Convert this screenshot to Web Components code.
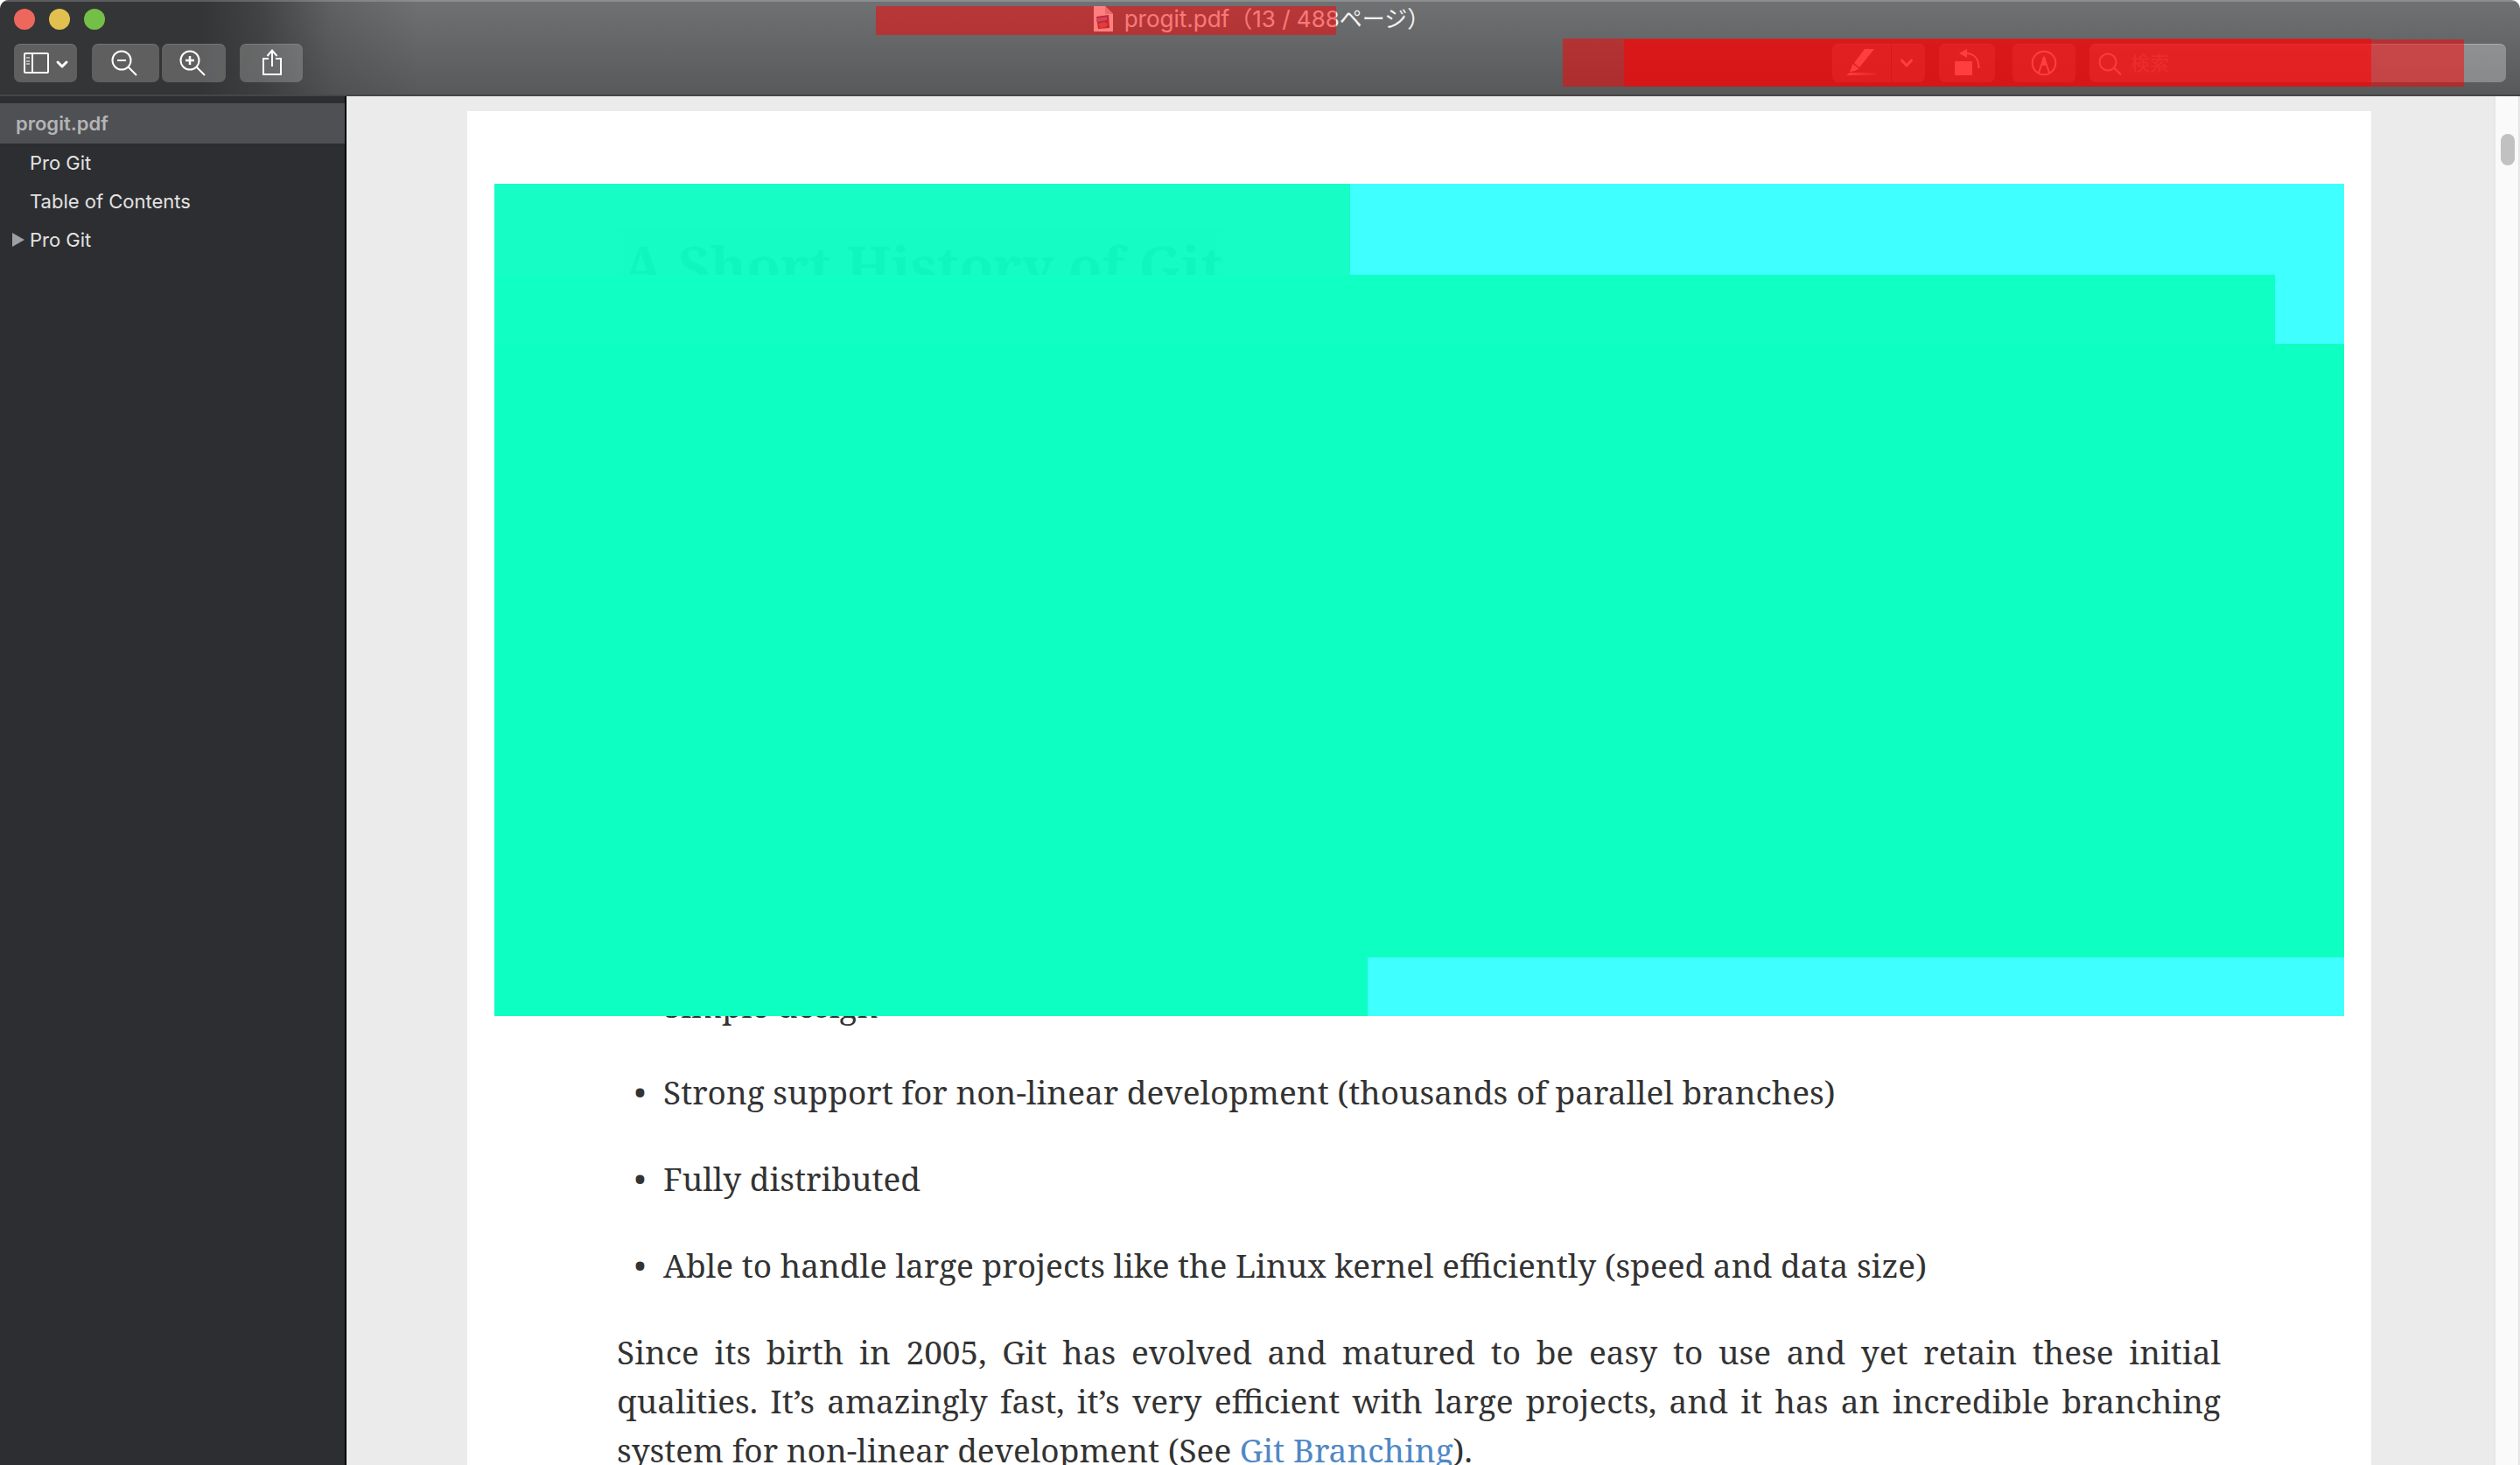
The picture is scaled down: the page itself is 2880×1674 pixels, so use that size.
<!DOCTYPE html>
<html lang="ja">
<head>
<meta charset="utf-8">
<title>progit.pdf</title>
<style>
  html, body { margin: 0; height: 100%; background: #fff; }
  body { font-family: Inter, "Noto Sans CJK JP", sans-serif; font-size: 22px; overflow: hidden; }
</style>
</head>
<body>
<pdf-window>
  <title-bar slot="header"></title-bar>
  <outline-list slot="sidebar">
    <outline-item current>progit.pdf</outline-item>
    <outline-item>Pro Git</outline-item>
    <outline-item>Table of Contents</outline-item>
    <outline-item expandable>Pro Git</outline-item>
  </outline-list>
  <pdf-page>
    <span slot="heading">A Short History of Git</span>
    <bullet-item slot="list">Simple design</bullet-item>
    <bullet-item slot="list">Strong support for non-linear development (thousands of parallel branches)</bullet-item>
    <bullet-item slot="list">Fully distributed</bullet-item>
    <bullet-item slot="list">Able to handle large projects like the Linux kernel efficiently (speed and data size)</bullet-item>
  </pdf-page>
</pdf-window>

<script>
const define = (name, html) => {
  const template = document.createElement('template');
  template.innerHTML = html;
  customElements.define(name, class extends HTMLElement {
    constructor() {
      super();
      this.attachShadow({ mode: 'open' }).append(template.content.cloneNode(true));
      const label = this.getAttribute('label');
      const button = this.shadowRoot.querySelector('button');
      if (label && button) button.setAttribute('aria-label', label);
    }
  });
};

define('pdf-window', `
<style>
  :host { display: flex; flex-direction: column; height: 100vh; overflow: hidden; border-radius: 10px 10px 0 0; }
  .body { flex: 1; min-height: 0; display: flex; }
  .sidebar { flex: none; width: 394px; background: #2d2e31; border-right: 2px solid #000; }
  .canvas { flex: 1; min-width: 0; overflow: hidden; background: #ebebeb; padding: 17px 140px 0 138px; }
  .scroll { flex: none; width: 22px; padding: 43px 1px 0 3px; background: #fafafa; border: solid #e6e6e6; border-width: 0 2px; display: flex; flex-direction: column; align-items: center; }
  .thumb { width: 16px; height: 36px; border-radius: 8px; background: #c1c1c1; }
</style>
<slot name="header"></slot>
<div class="body">
  <nav class="sidebar"><slot name="sidebar"></slot></nav>
  <main class="canvas"><slot></slot></main>
  <div class="scroll"><div class="thumb"></div></div>
</div>`);

/* translucent marker laid over the toolbar */
define('red-mark', `
<style>:host { display: block; position: absolute; background: rgba(255, 0, 0, .5); pointer-events: none; }</style>`);

define('tool-button', `
<style>
  :host { display: flex; height: 44px; }
  button { all: unset; display: flex; width: 100%; height: 44px; border-radius: 7px; background: rgba(255,255,255,.21); box-shadow: inset 0 1px rgba(255,255,255,.12); color: #fff; }
</style>
<button type="button"><slot></slot></button>`);

define('title-bar', `
<style>
  :host { display: block; position: relative; color: #f2f2f2;
    background: linear-gradient(to right, #343536 0, #343536 230px, rgba(52,53,54,.75) 300px, rgba(52,53,54,.25) 380px, transparent 480px), linear-gradient(#707173, #58595a);
    border-bottom: 2px solid #474645; box-shadow: inset 0 2px rgba(255,255,255,.2); }
  .title { display: grid; grid-template-columns: 1fr auto 1fr; align-items: center; height: 44px; padding: 0 16px; }
  .lights { display: flex; gap: 16px; }
  .lights i { width: 24px; height: 24px; border-radius: 50%; }
  h1 { margin: 0; padding-left: 4px; display: flex; align-items: center; gap: 12px; font-size: 26px; font-weight: 400; line-height: 44px; }
  .tools { display: flex; padding: 6px 16px 14px; }
  .tools > * { flex: none; }
  svg { display: block; fill: none; stroke: currentColor; stroke-width: 2; }
  .gap { margin-left: 16px; }
  .zoom { margin-left: 17px; }
  .wide { margin-left: 20px; }
  .join { margin-left: 3px; }
  .push { margin-left: auto; }
  .search { display: flex; align-items: center; width: 476px; height: 44px; border-radius: 7px; background: rgba(255,255,255,.28); box-shadow: inset 0 1px rgba(255,255,255,.25); }
  input { all: unset; flex: 1; min-width: 0; font-size: 22px; line-height: 44px; color: #fff; }
  input::placeholder { color: #b2b3b4; opacity: 1; }
  .m1 { left: 1001px; top: 7px; width: 526px; height: 33px; }
  .m2 { left: 1786px; top: 44px; width: 924px; height: 55px; }
  .m3 { left: 1856px; top: 45px; width: 960px; height: 54px; }
</style>
<div class="title">
  <div class="lights"><i style="background:#ee675c"></i><i style="background:#e1c04f"></i><i style="background:#74bf47"></i></div>
  <h1>
    <svg width="23" height="30" viewBox="0 0 23 30" stroke="none"><path d="M0 0H13L22 9V29H0Z" fill="#fff" stroke="none"/><path d="M13 0L22 9H13Z" fill="#d4d4d4" stroke="none"/><path d="M3 12L17 10L18 25L5 26Z" fill="#8a5160" stroke="none"/><path d="M3 14L15 12V16L3 18Z" fill="#9e90c4" stroke="none"/><path d="M5 20L12 18L16 20L14 24L7 25Z" fill="#c97870" stroke="none"/></svg>
    <span>progit.pdf（13 / 488ページ）</span>
  </h1>
</div>
<div class="tools">
  <tool-button label="サイドバー" style="width:72px"><svg width="72" height="44"><rect x="12" y="11" width="27" height="22" rx="1"/><path d="M21 11V33"/><path d="M14 16H18M14 20H18M14 23H18" stroke-width="1.5" opacity=".7"/><path d="M50 21L55 26L60 21" stroke-width="3" stroke-linecap="round" stroke-linejoin="round"/></svg></tool-button>
  <tool-button label="縮小" class="zoom" style="width:77px"><svg width="77" height="44"><circle cx="34" cy="19" r="10.5"/><path d="M29 19H39M41.500 26.500L51 36"/></svg></tool-button>
  <tool-button label="拡大" class="join" style="width:73px"><svg width="73" height="44"><circle cx="32" cy="19" r="10.500"/><path d="M27 19H37M32 14V24" stroke-width="2.500"/><path d="M39.500 26.500L49 36"/></svg></tool-button>
  <tool-button label="共有" class="gap" style="width:72px"><svg width="72" height="44"><path d="M33 17H27V35H47V17H41M37 26V8M31.500 14L37 7.500L42.500 14"/></svg></tool-button>
  <tool-button label="ハイライト" class="push" style="width:106px"><svg width="106" height="44"><defs><linearGradient id="fade"><stop offset="0" stop-color="#fff"/><stop offset="1" stop-color="#fff" stop-opacity=".1"/></linearGradient></defs><g fill="currentColor" stroke="none"><path d="M37 6H48L31 27L25 22Z"/><path d="M23.500 23L30.500 28.500L26 31L20 32Z"/></g><path d="M20 33H52L48 36H16Z" fill="url(#fade)" stroke="none"/><path d="M67.500 0V44" stroke="#000" stroke-opacity=".25" stroke-width="1"/><path d="M79.500 19L85 25L90.500 19" stroke-width="3" stroke-linecap="round" stroke-linejoin="round"/></svg></tool-button>
  <tool-button label="回転" class="gap" style="width:64px"><svg width="64" height="44"><rect x="18" y="20" width="20" height="16" rx="1" fill="currentColor" stroke="none"/><path d="M23 11L32 6V16Z" fill="currentColor" stroke="none"/><path d="M31 11C40 11 45.500 17 45.500 28"/></svg></tool-button>
  <tool-button label="マークアップ" class="wide" style="width:72px"><svg width="72" height="44"><circle cx="36" cy="22" r="13.300"/><path d="M30 33L36 16L42 33"/><path d="M32.500 25L35 15H37L39.500 25Z" fill="currentColor" stroke="none"/></svg></tool-button>
  <label class="search gap"><svg width="47" height="44"><circle cx="21" cy="21" r="9.500"/><path d="M28 27.500L36 35.500"/></svg><input type="text" placeholder="検索" aria-label="検索"></label>
</div>
<red-mark class="m1"></red-mark>
<red-mark class="m2"></red-mark>
<red-mark class="m3"></red-mark>`);

define('outline-list', `
<style>:host { display: flex; flex-direction: column; padding-top: 8px; }</style>
<slot></slot>`);

define('outline-item', `
<style>
  :host { display: flex; align-items: center; height: 44px; color: #e2e2e2; }
  :host([current]) { height: 46px; background: #4f5054; color: #b4b4b5; font-weight: 600; }
  .mark { width: 34px; box-sizing: border-box; padding-left: 14px; color: #a0a0a2; }
  :host([current]) .mark { width: 18px; }
  svg { display: none; }
  :host([expandable]) svg { display: block; }
</style>
<span class="mark"><svg width="14" height="16"><path d="M0 0L14 8L0 16Z" fill="currentColor"/></svg></span><slot></slot>`);

define('bullet-item', `
<style>
  :host { display: grid; grid-template-columns: 53px 1fr; }
  :host::before { content: "•"; text-align: center; }
</style>
<span><slot></slot></span>`);

/* covers the upper part of the page with stepped colour bands */
define('page-cover', `
<style>
  :host { position: absolute; top: 83px; left: 31px; right: 31px; display: grid; grid-template-rows: 104px 79px 701px 67px; }
  div { display: flex; }
  div::after { content: ""; flex: 1; background: #40ffff; }
  i { background: #0dffc1; }
  .a { width: 978px; background: rgba(14,253,195,.97); }
  .b { width: 2035px; background: #10ffc2; }
  .c { width: 100%; }
  .d { width: 998px; }
</style>
<div><i class="a"></i></div><div><i class="b"></i></div><div><i class="c"></i></div><div><i class="d"></i></div>`);

define('pdf-page', `
<style>
  :host { display: block; position: relative; background: #fff; padding: 135px 172px 0 171px; min-height: 1600px; color: #333; font-family: "Noto Serif", serif; font-size: 37px; line-height: 56px; }
  h2 { margin: 0; width: fit-content; font-size: 63px; line-height: 84px; background: #ddd; padding-left: 6px; }
  .covered { height: 775px; }
  .list { display: flex; flex-direction: column; gap: 43px; margin-bottom: 43px; }
  p { margin: 0; text-align: justify; }
  .line { display: block; text-align-last: justify; white-space: nowrap; }
  a { color: #5088c6; text-decoration: none; }
</style>
<h2><slot name="heading"></slot></h2>
<div class="covered"></div>
<div class="list"><slot name="list"></slot></div>
<p><span class="line">Since its birth in 2005, Git has evolved and matured to be easy to use and yet retain these initial</span>
<span class="line">qualities. It’s amazingly fast, it’s very efficient with large projects, and it has an incredible branching</span>
system for non-linear development (See <a href="#branching">Git Branching</a>).</p>
<page-cover></page-cover>`);
</script>
</body>
</html>
